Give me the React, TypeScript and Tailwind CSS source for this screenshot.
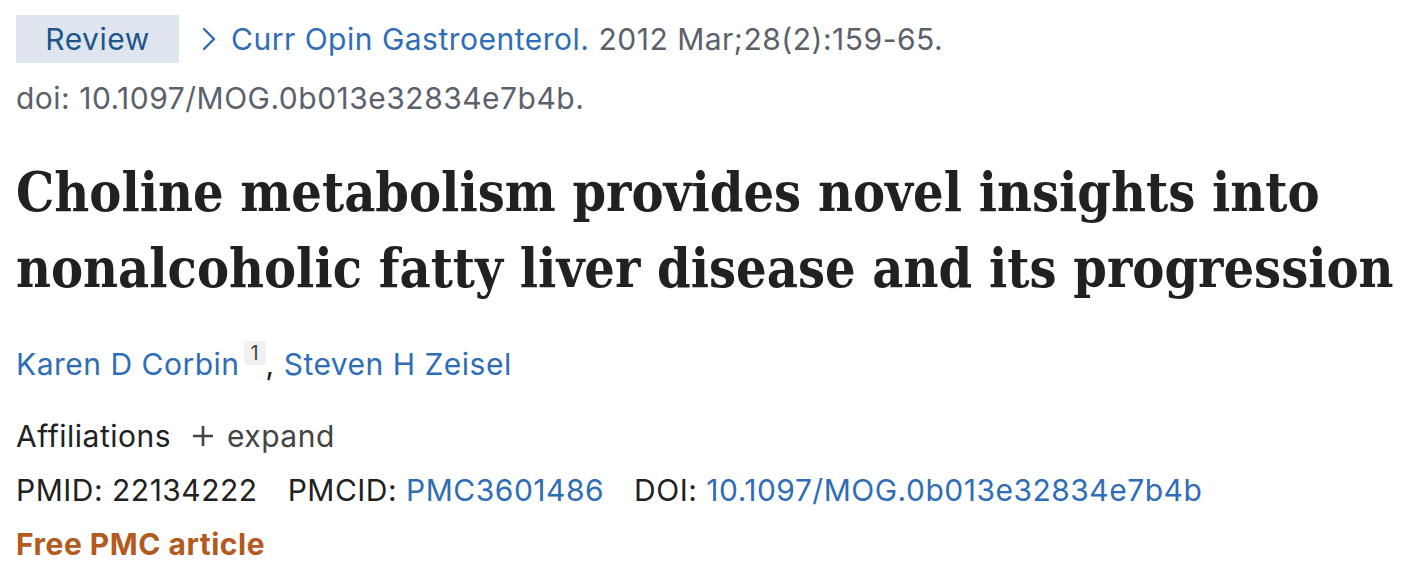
import React from "react";

export default function App() {
  const sans = { fontFamily: "Inter, 'Liberation Sans', sans-serif" };
  return (
    <div className="w-[1408px] h-[570px] bg-white pl-4 pt-[15px] text-[#212121] tracking-[0.5px]" style={sans}>
      <div className="flex items-center h-12">
        <div className="w-[163px] h-12 bg-[#dfe5ef] text-[#20558a] text-[30px] flex items-center justify-center">
          Review
        </div>
        <svg className="ml-[23px] mr-[15px]" width="14" height="24" viewBox="0 0 14 24" fill="none">
          <path d="M2 2 L12 12 L2 22" stroke="#2f6db6" strokeWidth="2.4" strokeLinecap="round" strokeLinejoin="round" />
        </svg>
        <span className="text-[30px] text-[#2f6db6]">Curr Opin Gastroenterol.</span>
        <span className="text-[30px] text-[#5b616b] ml-[9px]">2012 Mar;28(2):159-65.</span>
      </div>
      <div className="text-[30px] text-[#5b616b] mt-[18px] leading-[34px]">doi: 10.1097/MOG.0b013e32834e7b4b.</div>
      <h1
        className="mt-[40px] text-[53.5px] font-bold leading-[76px] text-[#212121] tracking-normal"
        style={{ fontFamily: "'DejaVu Serif Condensed', 'DejaVu Serif', serif" }}
      >
        Choline metabolism provides novel insights into
        <br />
        nonalcoholic fatty liver disease and its progression
      </h1>
      <div className="mt-[40px] flex items-start text-[30px] leading-[34px]">
        <span className="text-[#2f6db6]">Karen D Corbin</span>
        <span className="ml-[4px] mt-[-6px] w-[22px] h-[24px] bg-[#f1f1f1] text-[#444] text-[20px] leading-[24px] text-center rounded-[3px] tracking-normal">1</span>
        <span>,&nbsp;</span>
        <span className="text-[#2f6db6]">Steven H Zeisel</span>
      </div>
      <div className="mt-[38px] flex items-center text-[30px] leading-[34px]">
        <span>Affiliations</span>
        <svg className="ml-[21px]" width="22" height="22" viewBox="0 0 22 22" fill="none">
          <path d="M11 1 V21 M1 11 H21" stroke="#444" strokeWidth="2.6" />
        </svg>
        <span className="ml-[13px] text-[#444]">expand</span>
      </div>
      <div className="mt-[20px] flex items-center text-[30px] leading-[34px]">
        <span>PMID: 22134222</span>
        <span className="ml-[30px]">PMCID:&nbsp;</span>
        <span className="text-[#2f6db6]">PMC3601486</span>
        <span className="ml-[30px]">DOI:&nbsp;</span>
        <span className="text-[#2f6db6]">10.1097/MOG.0b013e32834e7b4b</span>
      </div>
      <div className="mt-[20px] text-[30px] leading-[34px] font-bold text-[#b35a1f]">Free PMC article</div>
    </div>
  );
}
